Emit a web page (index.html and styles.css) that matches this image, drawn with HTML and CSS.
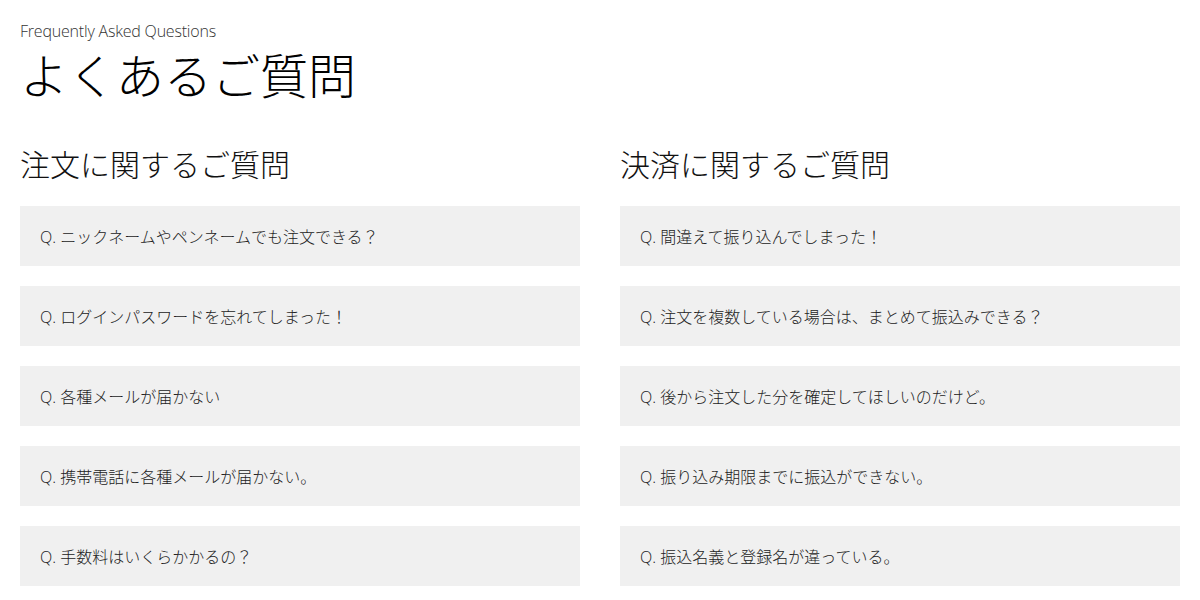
FILE: index.html
```html
<!DOCTYPE html>
<html lang="ja">
<head>
<meta charset="utf-8">
<title>よくあるご質問</title>
<link rel="stylesheet" href="styles.css">
</head>
<body>
<div class="page">
  <header class="head">
    <p class="eyebrow">Frequently Asked Questions</p>
    <h1 class="title">よくあるご質問</h1>
  </header>
  <div class="cols">
    <section class="col">
      <h2 class="sub">注文に関するご質問</h2>
      <ul class="list">
        <li class="item">Q. ニックネームやペンネームでも注文できる？</li>
        <li class="item">Q. ログインパスワードを忘れてしまった！</li>
        <li class="item">Q. 各種メールが届かない</li>
        <li class="item">Q. 携帯電話に各種メールが届かない。</li>
        <li class="item">Q. 手数料はいくらかかるの？</li>
      </ul>
    </section>
    <section class="col">
      <h2 class="sub">決済に関するご質問</h2>
      <ul class="list">
        <li class="item">Q. 間違えて振り込んでしまった！</li>
        <li class="item">Q. 注文を複数している場合は、まとめて振込みできる？</li>
        <li class="item">Q. 後から注文した分を確定してほしいのだけど。</li>
        <li class="item">Q. 振り込み期限までに振込ができない。</li>
        <li class="item">Q. 振込名義と登録名が違っている。</li>
      </ul>
    </section>
  </div>
</div>
</body>
</html>
```
FILE: styles.css
```css
* { box-sizing: border-box; }
html, body { margin: 0; padding: 0; background: #fff; }
body {
  font-family: "Open Sans", "Noto Sans CJK JP", sans-serif;
  color: #222;
}
.page { padding: 21px 20px 0; }
.head { display: flex; flex-direction: column; }
.eyebrow {
  margin: 0;
  font-size: 16px;
  font-weight: 300;
  line-height: 20px;
  letter-spacing: -0.2px;
  color: #333;
}
.title {
  margin: 0;
  font-size: 48px;
  font-weight: 300;
  line-height: 64px;
  color: #000;
  font-family: "Noto Sans CJK JP", sans-serif;
}
.cols {
  margin-top: 36px;
  display: grid;
  grid-template-columns: 1fr 1fr;
  column-gap: 40px;
}
.sub {
  margin: 0 0 21px;
  font-size: 30px;
  font-weight: 300;
  line-height: 44px;
  color: #111;
  font-family: "Noto Sans CJK JP", sans-serif;
}
.list {
  list-style: none;
  margin: 0;
  padding: 0;
  display: flex;
  flex-direction: column;
  gap: 20px;
}
.item {
  height: 60px;
  display: flex;
  align-items: center;
  padding: 0 20px;
  background: #f0f0f0;
  font-size: 16px;
  font-weight: 300;
  color: #222;
}
```
